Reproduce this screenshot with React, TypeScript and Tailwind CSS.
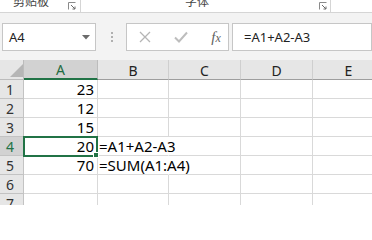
import React from "react";

const FONT = '"Noto Sans", "Noto Sans CJK SC", sans-serif';

function Launcher() {
  return (
    <svg width="8" height="8" viewBox="0 0 8 8" className="mt-[2px]">
      <path d="M0.5 7.5V0.5H7.5" fill="none" stroke="#8a8a8a" strokeWidth="1" />
      <path d="M3 3L7 7M4.5 7H7V4.5" fill="none" stroke="#6a6a6a" strokeWidth="1" />
    </svg>
  );
}

const cols = [
  { key: "A", w: "w-[74px]" },
  { key: "B", w: "w-[71px]" },
  { key: "C", w: "w-[72px]" },
  { key: "D", w: "w-[72px]" },
  { key: "E", w: "w-[72px]" },
];

const data: Record<number, { A?: string; B?: string }> = {
  1: { A: "23" },
  2: { A: "12" },
  3: { A: "15" },
  4: { A: "20", B: "=A1+A2-A3" },
  5: { A: "70", B: "=SUM(A1:A4)" },
  6: {},
  7: {},
};

export default function App() {
  return (
    <div
      className="relative w-[372px] h-[205px] overflow-hidden bg-[#f3f3f3] text-black"
      style={{ fontFamily: FONT }}
    >
      {/* Ribbon group labels */}
      <div className="flex h-[13px] bg-white border-b border-[#d5d5d5] overflow-hidden">
        <div className="flex w-[81px] justify-between pl-[13px] pr-[4px] border-r border-[#d5d5d5]">
          <span className="-mt-[4px] text-[12px] leading-[12px] text-[#444]">剪贴板</span>
          <Launcher />
        </div>
        <div className="flex w-[250px] justify-between pl-[104px] pr-[3px] border-r border-[#d5d5d5]">
          <span className="-mt-[4px] text-[12px] leading-[12px] text-[#444]">字体</span>
          <Launcher />
        </div>
      </div>

      {/* Formula bar */}
      <div className="flex h-[47px] items-start pt-[10px]">
        <div className="ml-[2px] flex h-[28px] w-[101px] items-center justify-between border border-[#c6c6c6] bg-white pl-[6px] pr-[5px]">
          <span className="text-[13px] leading-none text-[#222]">A4</span>
          <svg width="8" height="5" viewBox="0 0 8 5">
            <path d="M0 0H8L4 4.5Z" fill="#6b6b6b" />
          </svg>
        </div>
        <div className="ml-[15px] mt-[9px] flex flex-col gap-[2px]">
          <div className="h-[2px] w-[2px] bg-[#b0b0b0]" />
          <div className="h-[2px] w-[2px] bg-[#b0b0b0]" />
          <div className="h-[2px] w-[2px] bg-[#b0b0b0]" />
        </div>
        <div className="ml-[13px] flex h-[28px] w-[111px] items-center border border-[#c6c6c6] bg-white">
          <svg width="12" height="12" viewBox="0 0 12 12" className="ml-[12px]">
            <path d="M1 1L11 11M11 1L1 11" stroke="#b5b5b5" strokeWidth="1.3" fill="none" />
          </svg>
          <svg width="14" height="12" viewBox="0 0 14 12" className="ml-[23px]">
            <path d="M1 6.5L5 10.5L13 1.5" stroke="#bdbdbd" strokeWidth="2" fill="none" />
          </svg>
          <span
            className="ml-[23px] text-[15px] italic leading-none text-[#5f5f5f]"
            style={{ fontFamily: '"Liberation Serif", "DejaVu Serif", serif' }}
          >
            f<span className="text-[12px]">x</span>
          </span>
        </div>
        <div className="ml-[3px] flex h-[28px] w-[140px] shrink-0 items-center border border-[#c6c6c6] bg-white pl-[11px]">
          <span className="text-[13px] leading-none text-[#222]">=A1+A2-A3</span>
        </div>
      </div>

      {/* Grid */}
      <div className="relative">
        {/* Column header row */}
        <div className="flex h-[20px]">
          <div className="relative w-[24px] shrink-0 border-r border-b border-[#bcbcbc] bg-[#e6e6e6]">
            <svg width="13" height="13" viewBox="0 0 13 13" className="absolute left-[10px] top-[4px]">
              <path d="M13 0V13H0Z" fill="#b6b6b6" />
            </svg>
          </div>
          {cols.map((c) =>
            c.key === "A" ? (
              <div
                key={c.key}
                className={`${c.w} shrink-0 border-r border-r-[#bcbcbc] border-b-2 border-b-[#217346] bg-[#d2d2d2] pt-[1px] text-center text-[14px] leading-[17px] text-[#1e6b41]`}
              >
                {c.key}
              </div>
            ) : (
              <div
                key={c.key}
                className={`${c.w} shrink-0 border-r border-r-[#cfcfcf] border-b border-b-[#9e9e9e] bg-[#e6e6e6] pt-[2px] text-center text-[14px] leading-[17px] text-[#222]`}
              >
                {c.key}
              </div>
            )
          )}
        </div>

        {/* Rows */}
        <div className="bg-white">
          {[1, 2, 3, 4, 5, 6, 7].map((r) => {
            const sel = r === 4;
            const row = data[r];
            const overflow = !!row.B;
            return (
              <div key={r} className="flex h-[19px]">
                <div
                  className={`w-[24px] shrink-0 border-r border-b border-[#c3c3c3] pl-[6px] text-[14px] leading-[19px] ${
                    sel ? "bg-[#d2d2d2] text-[#217346]" : "bg-[#e6e6e6] text-[#333]"
                  }`}
                >
                  {r}
                </div>
                {cols.map((c) => {
                  const val = c.key === "A" ? row.A : c.key === "B" ? row.B : undefined;
                  const noRight = c.key === "B" && overflow;
                  return (
                    <div
                      key={c.key}
                      className={`${c.w} shrink-0 border-b border-[#d9d9d9] ${
                        noRight ? "border-r border-r-transparent" : "border-r"
                      } relative z-10 whitespace-nowrap text-[15px] leading-[19px] ${
                        c.key === "A" ? "pr-[3px] text-right" : "pl-[1px] text-left"
                      }`}
                    >
                      {val}
                    </div>
                  );
                })}
              </div>
            );
          })}
        </div>

        {/* Selection overlay */}
        <div className="pointer-events-none absolute left-[23px] top-[76px] z-20 h-[21px] w-[75px] border-2 border-[#217346]">
          <div className="absolute -bottom-[3px] -right-[3px] h-[6px] w-[6px] border border-white bg-[#217346]" />
        </div>
      </div>
    </div>
  );
}
